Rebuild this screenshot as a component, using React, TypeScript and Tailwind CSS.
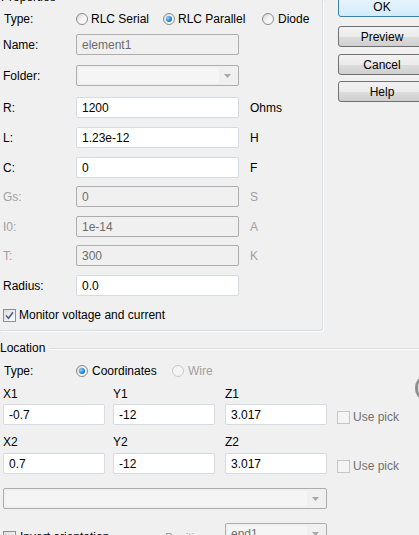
import React from "react";

const font = "font-['Liberation_Sans',Arial,sans-serif]";

function Radio({ checked, disabled }: { checked?: boolean; disabled?: boolean }) {
  return (
    <span
      className={`flex h-[12px] w-[12px] shrink-0 items-center justify-center rounded-full border ${
        disabled ? "border-[#c8c8c8] bg-[#f4f4f4]" : "border-[#8a8a8a] bg-gradient-to-br from-[#d4d4d4] via-[#f4f4f4] to-[#ffffff]"
      }`}
    >
      {checked && (
        <span className="h-[6px] w-[6px] rounded-full bg-[radial-gradient(circle_at_35%_35%,#8fd4ff,#1c7fcf_60%,#0b4f8f)]" />
      )}
    </span>
  );
}

function Check({ checked, disabled }: { checked?: boolean; disabled?: boolean }) {
  return (
    <span
      className={`flex h-[13px] w-[13px] shrink-0 items-center justify-center border ${
        disabled ? "border-[#c5c5c5] bg-[#f4f4f4]" : "border-[#8e8f8f] bg-gradient-to-br from-[#dcdcdc] to-[#ffffff]"
      }`}
    >
      {checked && (
        <svg width="9" height="9" viewBox="0 0 9 9">
          <path d="M1 4.5 L3.5 7.2 L8 1.2" fill="none" stroke="#4a5f97" strokeWidth="1.6" />
        </svg>
      )}
    </span>
  );
}

function Input({ value, disabled, w }: { value: string; disabled?: boolean; w: string }) {
  return (
    <div
      className={`flex h-[21px] shrink-0 items-center rounded-[2px] border pl-[5px] ${w} ${
        disabled ? "border-[#adadad] bg-[#f0f0f0] text-[#6d6d6d]" : "border-[#d6dbe1] bg-white text-black"
      }`}
    >
      {value}
    </div>
  );
}

function Combo({ w, value, dim }: { w: string; value?: string; dim?: boolean }) {
  return (
    <div className={`flex h-[21px] shrink-0 items-center rounded-[2px] border border-[#adadad] bg-[#f0f0f0] p-[2px] ${w}`}>
      <div className={`flex h-full flex-1 items-center bg-[#f5f5f5] pl-[3px] ${dim ? "text-[#6d6d6d]" : ""}`}>{value}</div>
      <div className="flex w-[17px] items-center justify-center">
        <svg width="7" height="4" viewBox="0 0 7 4">
          <path d="M0 0 H7 L3.5 4 Z" fill="#a8a8a8" />
        </svg>
      </div>
    </div>
  );
}

function Btn({ label, def, cls }: { label: string; def?: boolean; cls: string }) {
  return (
    <div
      className={`flex h-[21px] w-[88px] shrink-0 items-center justify-center rounded-[3px] border ${cls} ${
        def
          ? "border-[#3c7fb1] bg-gradient-to-b from-[#eaf6fd] to-[#d3ebfb]"
          : "border-[#707070] bg-[linear-gradient(#f2f2f2,#ebebeb_50%,#dddddd_51%,#cfcfcf)]"
      }`}
    >
      {label}
    </div>
  );
}

type Row = { label: string; value?: string; unit?: string; disabled?: boolean; mt: string; kind?: "combo" };

const rows: Row[] = [
  { label: "Name:", value: "element1", disabled: true, mt: "mt-[5px]" },
  { label: "Folder:", kind: "combo", mt: "mt-[10px]" },
  { label: "R:", value: "1200", unit: "Ohms", mt: "mt-[11px]" },
  { label: "L:", value: "1.23e-12", unit: "H", mt: "mt-[9px]" },
  { label: "C:", value: "0", unit: "F", mt: "mt-[9px]" },
  { label: "Gs:", value: "0", unit: "S", disabled: true, mt: "mt-[8px]" },
  { label: "I0:", value: "1e-14", unit: "A", disabled: true, mt: "mt-[9px]" },
  { label: "T:", value: "300", unit: "K", disabled: true, mt: "mt-[8px]" },
  { label: "Radius:", value: "0.0", mt: "mt-[9px]" },
];

export default function App() {
  return (
    <div className={`relative h-[535px] w-[419px] overflow-hidden bg-[#f0f0f0] text-[12px] leading-[14px] text-black ${font}`}>
      {/* properties + buttons */}
      <div className="flex">
        <div className="h-[331px] w-[323px] shrink-0 rounded-br-[3px] border-r border-b border-[#d5dfe5] shadow-[1px_1px_0_#ffffff]">
          <div className="-mt-[10px] h-[14px] pl-[1px]">Properties</div>

          <div className="mt-[5px] flex h-[20px] items-center">
            <span className="w-[76px] shrink-0 pl-[4px]">Type:</span>
            <span className="flex w-[87px] shrink-0 items-center gap-[3px]"><Radio />RLC Serial</span>
            <span className="flex w-[99px] shrink-0 items-center gap-[3px]"><Radio checked />RLC Parallel</span>
            <span className="flex items-center gap-[4px]"><Radio />Diode</span>
          </div>

          {rows.map(r => (
            <div key={r.label} className={`flex items-center ${r.mt}`}>
              <span className={`w-[76px] shrink-0 pl-[3px] ${r.disabled && r.unit ? "text-[#a0a0a0]" : ""}`}>{r.label}</span>
              {r.kind === "combo" ? (
                <Combo w="w-[163px]" />
              ) : (
                <Input value={r.value ?? ""} disabled={r.disabled} w="w-[163px]" />
              )}
              {r.unit && (
                <span className={`ml-[11px] ${r.disabled ? "text-[#a0a0a0]" : ""}`}>{r.unit}</span>
              )}
            </div>
          ))}

          <div className="mt-[12px] flex items-center gap-[3px] pl-[3px]">
            <Check checked />
            <span>Monitor voltage and current</span>
          </div>
        </div>

        <div className="ml-[15px] -mt-[4px] flex shrink-0 flex-col">
          <Btn label="OK" def cls="" />
          <Btn label="Preview" cls="mt-[9px]" />
          <Btn label="Cancel" cls="mt-[7px]" />
          <Btn label="Help" cls="mt-[6px]" />
        </div>
      </div>

      {/* location */}
      <div className="mt-[10px] flex h-[14px] items-center">
        <span>Location</span>
        <span className="ml-[4px] h-px flex-1 bg-[#d5dfe5] shadow-[0_1px_0_#ffffff]" />
      </div>

      <div className="mt-[8px] flex h-[16px] items-center">
        <span className="w-[76px] shrink-0 pl-[4px]">Type:</span>
        <span className="flex w-[96px] shrink-0 items-center gap-[4px]"><Radio checked />Coordinates</span>
        <span className="flex items-center gap-[4px] text-[#a0a0a0]"><Radio disabled />Wire</span>
      </div>

      {[
        { n: "1", x: "-0.7", y: "-12", z: "3.017", lt: "mt-[8px]", it: "mt-[3px]" },
        { n: "2", x: "0.7", y: "-12", z: "3.017", lt: "mt-[10px]", it: "mt-[4px]" },
      ].map(r => (
        <div key={r.n}>
          <div className={`flex h-[14px] items-center ${r.lt}`}>
            <span className="w-[113px] shrink-0 pl-[3px]">X{r.n}</span>
            <span className="w-[112px] shrink-0">Y{r.n}</span>
            <span>Z{r.n}</span>
          </div>
          <div className={`flex items-start pl-[3px] ${r.it}`}>
            <Input value={r.x} w="w-[102px]" />
            <div className="ml-[8px] shrink-0"><Input value={r.y} w="w-[102px]" /></div>
            <div className="ml-[10px] shrink-0"><Input value={r.z} w="w-[102px]" /></div>
            <span className="ml-[10px] mt-[6px] flex shrink-0 items-center gap-[3px] text-[#707070]">
              <Check disabled />Use pick
            </span>
          </div>
        </div>
      ))}

      <div className="mt-[14px] pl-[3px]">
        <Combo w="w-[324px]" />
      </div>

      <div className="mt-[14px] flex items-start pl-[3px]">
        <span className="mt-[7px] flex w-[162px] shrink-0 items-center gap-[4px]">
          <Check />Invert orientation
        </span>
        <span className="mt-[8px] w-[60px] shrink-0 text-[#a0a0a0]">Position:</span>
        <Combo w="w-[102px]" value="end1" dim />
      </div>

      {/* partial control peeking in at the right edge */}
      <div className="absolute left-[415px] top-[374px] h-[28px] w-[28px] rounded-full border-l-[3px] border-[#8f8f8f] bg-[#e8e8e8]" />
    </div>
  );
}
